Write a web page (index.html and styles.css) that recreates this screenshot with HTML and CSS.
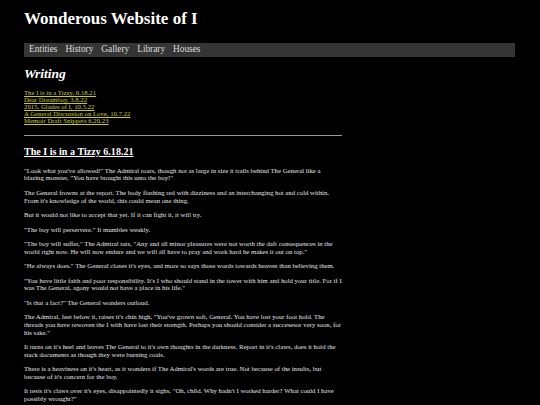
FILE: index.html
```html
<!DOCTYPE html>
<html lang="en">
<head>
<meta charset="utf-8">
<title>Wonderous Website of I</title>
<link rel="stylesheet" href="styles.css">
</head>
<body>
<div class="page">
  <h1 class="site-title">Wonderous Website of I</h1>
  <nav class="topnav">
    <a href="#">Entities</a>
    <a href="#">History</a>
    <a href="#">Gallery</a>
    <a href="#">Library</a>
    <a href="#">Houses</a>
  </nav>
  <h2 class="section-title">Writing</h2>
  <div class="toc">
    <a href="#tizzy">The I is in a Tizzy, 6.18.21</a>
    <a href="#">Dear Dreamboy, 3.8.22</a>
    <a href="#">2015, Glades of I, 10.5.22</a>
    <a href="#">A General Discussion on Love, 10.7.22</a>
    <a href="#">Memoir Draft Snippets 6.20.23</a>
  </div>
  <article class="story" id="tizzy">
    <hr class="rule">
    <h3 class="story-title">The I is in a Tizzy 6.18.21</h3>
    <p>"Look what you've allowed!" The Admiral roars, though not as large in size it trails behind The General like a blazing monster, "You have brought this unto the boy!"</p>
    <p>The General frowns at the report. The body flashing red with dizziness and an interchanging hot and cold within. From it's knowledge of the world, this could mean one thing.</p>
    <p>But it would not like to accept that yet. If it can fight it, it will try.</p>
    <p>"The boy will perservere." It mumbles weakly.</p>
    <p>"The boy will suffer," The Admiral tuts, "Any and all minor pleasures were not worth the daft consequences in the world right now. He will now endure and we will all have to pray and work hard he makes it out on top."</p>
    <p>"He always does." The General closes it's eyes, and more so says those words towards heaven than believing them.</p>
    <p>"You have little faith and poor responsibility. It's I who should stand in the tower with him and hold your title. For if I was The General, agony would not have a place in his life."</p>
    <p>"Is that a fact?" The General wonders outloud.</p>
    <p>The Admiral, feet below it, raises it's chin high, "You've grown soft, General. You have lost your foot hold. The threads you have rewoven the I with have lost their strength. Perhaps you should consider a succesesor very soon, for his sake."</p>
    <p>It turns on it's heel and leaves The General to it's own thoughts in the darkness. Report in it's claws, does it hold the stack documents as though they were burning coals.</p>
    <p>There is a heaviness on it's heart, as it wonders if The Admiral's words are true. Not because of the insults, but because of it's concern for the boy.</p>
    <p>It rests it's claws over it's eyes, disappointedly it sighs, "Oh, child. Why hadn't I worked harder? What could I have possibly wrought?"</p>
  </article>
</div>
</body>
</html>
```
FILE: styles.css
```css
html, body {
  margin: 0;
  padding: 0;
  background: #000;
}

body {
  color: #e4e4e4;
  font-family: "Liberation Serif", "Times New Roman", serif;
}

.page {
  padding: 9.3px 25px 20px 24px;
}

.site-title {
  margin: 0 0 14px;
  font-size: 17px;
  line-height: 19.5px;
  font-weight: bold;
  color: #fff;
}

.topnav {
  display: flex;
  gap: 8px;
  align-items: flex-start;
  height: 14.3px;
  box-sizing: border-box;
  padding: 1.2px 5px 0;
  background: #353535;
  font-size: 9.3px;
  line-height: 10.7px;
}

.topnav a {
  color: #dcdcdc;
  text-decoration: none;
}

.section-title {
  margin: 9.4px 0 0;
  font-size: 13.5px;
  line-height: 15.5px;
  font-style: italic;
  font-weight: bold;
  color: #fff;
}

.toc {
  margin-top: 7.3px;
  font-size: 6.75px;
  line-height: 7px;
}

.toc a {
  display: block;
  width: max-content;
  color: #caca2a;
  text-decoration: underline;
}

.story {
  width: 318px;
}

.rule {
  margin: 11.2px 0 0;
  height: 1px;
  border: 0;
  background: #9a9a9a;
}

.story-title {
  margin: 9.3px 0 9.4px;
  font-size: 10.1px;
  line-height: 11.6px;
  font-weight: bold;
  text-decoration: underline;
  color: #fff;
}

.story p {
  margin: 0 0 6.75px;
  font-size: 6.75px;
  line-height: 7.7px;
}
```
